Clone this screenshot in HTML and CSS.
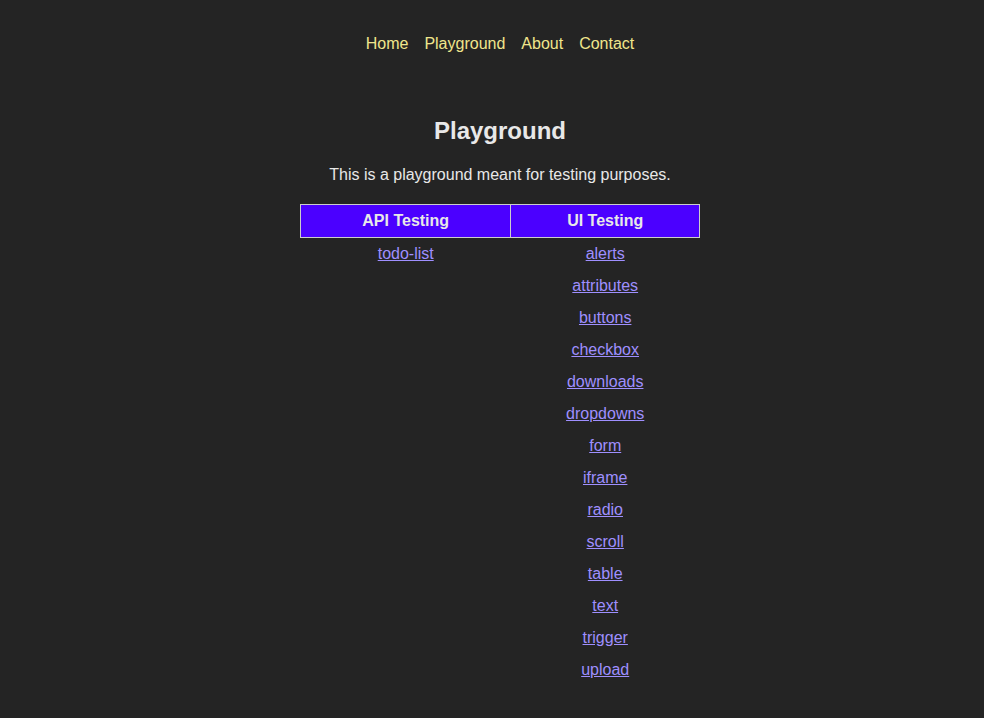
FILE: index.html
```html
<!DOCTYPE html>
<html lang="en">
<head>
<meta charset="utf-8">
<title>Playground</title>
<link rel="stylesheet" href="styles.css">
</head>
<body>
<nav class="nav">
  <a href="#" class="nav-link">Home</a>
  <a href="#" class="nav-link">Playground</a>
  <a href="#" class="nav-link">About</a>
  <a href="#" class="nav-link">Contact</a>
</nav>
<main class="main">
  <h1 class="title">Playground</h1>
  <p class="intro">This is a playground meant for testing purposes.</p>
  <table class="pg-table">
    <thead>
      <tr><th class="col-api">API Testing</th><th class="col-ui">UI Testing</th></tr>
    </thead>
    <tbody>
      <tr><td><a href="#">todo-list</a></td><td><a href="#">alerts</a></td></tr>
      <tr><td></td><td><a href="#">attributes</a></td></tr>
      <tr><td></td><td><a href="#">buttons</a></td></tr>
      <tr><td></td><td><a href="#">checkbox</a></td></tr>
      <tr><td></td><td><a href="#">downloads</a></td></tr>
      <tr><td></td><td><a href="#">dropdowns</a></td></tr>
      <tr><td></td><td><a href="#">form</a></td></tr>
      <tr><td></td><td><a href="#">iframe</a></td></tr>
      <tr><td></td><td><a href="#">radio</a></td></tr>
      <tr><td></td><td><a href="#">scroll</a></td></tr>
      <tr><td></td><td><a href="#">table</a></td></tr>
      <tr><td></td><td><a href="#">text</a></td></tr>
      <tr><td></td><td><a href="#">trigger</a></td></tr>
      <tr><td></td><td><a href="#">upload</a></td></tr>
    </tbody>
  </table>
</main>
</body>
</html>
```
FILE: styles.css
```css
html, body {
  margin: 0;
  padding: 0;
  background: #242424;
  color: #e8e8e8;
  font-family: "Liberation Sans", Arial, sans-serif;
  font-size: 16px;
}
body {
  padding-left: 16px;
}
.nav {
  display: flex;
  justify-content: center;
  gap: 16px;
  padding-top: 35px;
  line-height: 18px;
}
.nav-link {
  color: #f0e68c;
  text-decoration: none;
}
.main {
  display: flex;
  flex-direction: column;
  align-items: center;
}
.title {
  margin: 64px 0 0;
  font-size: 24px;
  line-height: 28px;
  font-weight: bold;
  color: #e8e8e8;
}
.intro {
  margin: 21px 0 0;
  line-height: 18px;
}
.pg-table {
  margin-top: 20px;
  border-collapse: collapse;
  width: 400px;
}
.pg-table th {
  background: #4b00ff;
  color: #e8e8e8;
  border: 1px solid #cccccc;
  height: 32px;
  padding: 0;
  font-weight: bold;
  line-height: 18px;
}
.col-api { width: 210px; }
.col-ui { width: 188px; }
.pg-table td {
  text-align: center;
  padding: 7px 0;
  line-height: 18px;
  height: 18px;
}
.pg-table td a {
  color: #9f8fff;
}
```
